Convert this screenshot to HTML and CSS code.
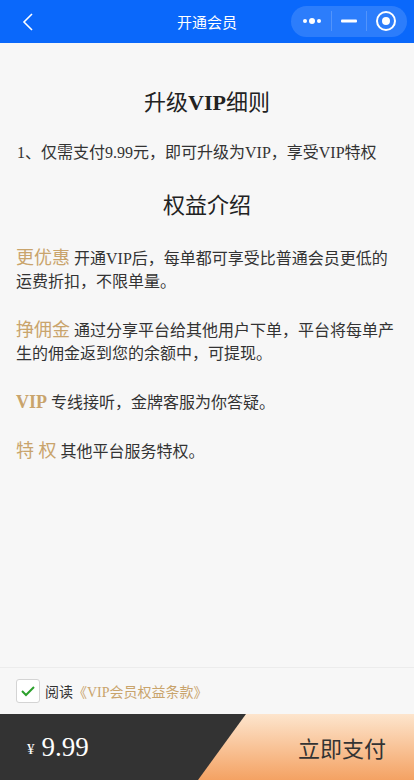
FILE: index.html
```html
<!DOCTYPE html>
<html lang="zh-CN">
<head>
    <meta charset="UTF-8">
    <meta name="viewport" content="width=device-width, initial-scale=1.0">
    <title>开通会员</title>
    <link rel="stylesheet" href="styles.css">
</head>
<body>
    <div class="page">
        <header class="nav">
            <svg class="nav-back" width="12" height="20" viewBox="0 0 12 20">
                <path d="M10 2 L2 10 L10 18" fill="none" stroke="#fff" stroke-width="1.6"/>
            </svg>
            <div class="nav-title">开通会员</div>
            <div class="capsule">
                <svg class="cap-btn" width="22" height="10" viewBox="0 0 22 10">
                    <circle cx="4" cy="5" r="2" fill="#fff"/>
                    <circle cx="11" cy="5" r="3" fill="#fff"/>
                    <circle cx="18" cy="5" r="2" fill="#fff"/>
                </svg>
                <span class="cap-line"></span>
                <svg class="cap-btn" width="18" height="10" viewBox="0 0 18 10">
                    <rect x="1" y="3.5" width="16" height="3" rx="1" fill="#fff"/>
                </svg>
                <span class="cap-line"></span>
                <svg class="cap-btn" width="22" height="22" viewBox="0 0 22 22">
                    <circle cx="11" cy="11" r="9" fill="none" stroke="#fff" stroke-width="2"/>
                    <circle cx="11" cy="11" r="4" fill="#fff"/>
                </svg>
            </div>
        </header>

        <main class="content">
            <h1 class="title">升级<b>VIP</b>细则</h1>
            <p class="rule">1、仅需支付9.99元，即可升级为VIP，享受VIP特权</p>

            <h2 class="title sub">权益介绍</h2>
            <p class="perk"><span class="tag">更优惠</span> 开通VIP后，每单都可享受比普通会员更低的运费折扣，不限单量。</p>
            <p class="perk"><span class="tag">挣佣金</span> 通过分享平台给其他用户下单，平台将每单产生的佣金返到您的余额中，可提现。</p>
            <p class="perk"><span class="tag vip">VIP</span> 专线接听，金牌客服为你答疑。</p>
            <p class="perk"><span class="tag">特 权</span> 其他平台服务特权。</p>
        </main>

        <footer>
            <div class="agree">
                <span class="check">
                    <svg width="16" height="12" viewBox="0 0 16 12">
                        <path d="M2 6 L6 10 L14 2" fill="none" stroke="#2ca02c" stroke-width="2"/>
                    </svg>
                </span>
                <span>阅读</span>
                <span class="terms">《VIP会员权益条款》</span>
            </div>
            <div class="paybar">
                <div class="price"><span class="yen">¥</span>9.99</div>
                <div class="pay-btn">立即支付</div>
            </div>
        </footer>
    </div>
</body>
</html>
```

FILE: styles.css
```css
* {
    box-sizing: border-box;
}
body {
    margin: 0;
    font-family: "Liberation Serif", "Noto Sans CJK SC", serif;
    color: #333;
    background: #f7f7f7;
}
.page {
    display: flex;
    flex-direction: column;
    height: 780px;
}

/* top bar */
.nav {
    position: relative;
    height: 43px;
    background: #0a68fb;
    display: flex;
    align-items: center;
    padding: 0 7px 0 22px;
}
.nav-title {
    position: absolute;
    left: 0;
    right: 0;
    text-align: center;
    color: #fff;
    font-family: "Noto Sans CJK SC", sans-serif;
    font-size: 15px;
    line-height: 43px;
    pointer-events: none;
}
.capsule {
    margin-left: auto;
    width: 116px;
    height: 31px;
    margin-top: -1px;
    border-radius: 16px;
    background: rgba(255, 255, 255, 0.14);
    display: flex;
    align-items: center;
    justify-content: space-around;
    padding: 0 6px;
}
.cap-line {
    width: 1px;
    height: 20px;
    background: rgba(255, 255, 255, 0.18);
}

/* content */
.content {
    flex: 1;
    padding: 0 16px;
}
.title {
    margin: 45px 0 0;
    text-align: center;
    font-size: 22px;
    font-weight: normal;
    line-height: 30px;
    color: #222;
}
.title.sub {
    margin-top: 28px;
}
.rule {
    margin: 25px 0 0 1px;
    font-size: 16px;
    line-height: 20px;
    color: #333;
}
.perk {
    margin: 26px 0 0;
    font-size: 16px;
    line-height: 23px;
    color: #333;
}
.tag {
    font-size: 18px;
    line-height: 1;
    color: #c9a46c;
}
.tag.vip {
    font-weight: bold;
}

/* bottom */
.agree {
    height: 47px;
    border-top: 1px solid #ececec;
    display: flex;
    align-items: center;
    padding: 0 16px;
    font-size: 14px;
    color: #333;
}
.check {
    width: 24px;
    height: 24px;
    border: 1px solid #d4d4d4;
    border-radius: 3px;
    background: #fff;
    display: flex;
    align-items: center;
    justify-content: center;
    margin-right: 5px;
}
.terms {
    color: #c9a46c;
}
.paybar {
    height: 66px;
    display: flex;
    align-items: center;
    background: linear-gradient(#fde5cd, #f4a263);
}
.price {
    align-self: stretch;
    width: 246px;
    background: #333;
    clip-path: polygon(0 0, 100% 0, 198px 100%, 0 100%);
    display: flex;
    align-items: center;
    padding-left: 27px;
    color: #fff;
    font-size: 27px;
}
.yen {
    font-size: 15px;
    margin-right: 7px;
    margin-top: 5px;
}
.pay-btn {
    margin-left: auto;
    margin-right: 28px;
    font-family: "Noto Sans CJK SC", sans-serif;
    font-size: 22px;
    color: #333;
}
```
